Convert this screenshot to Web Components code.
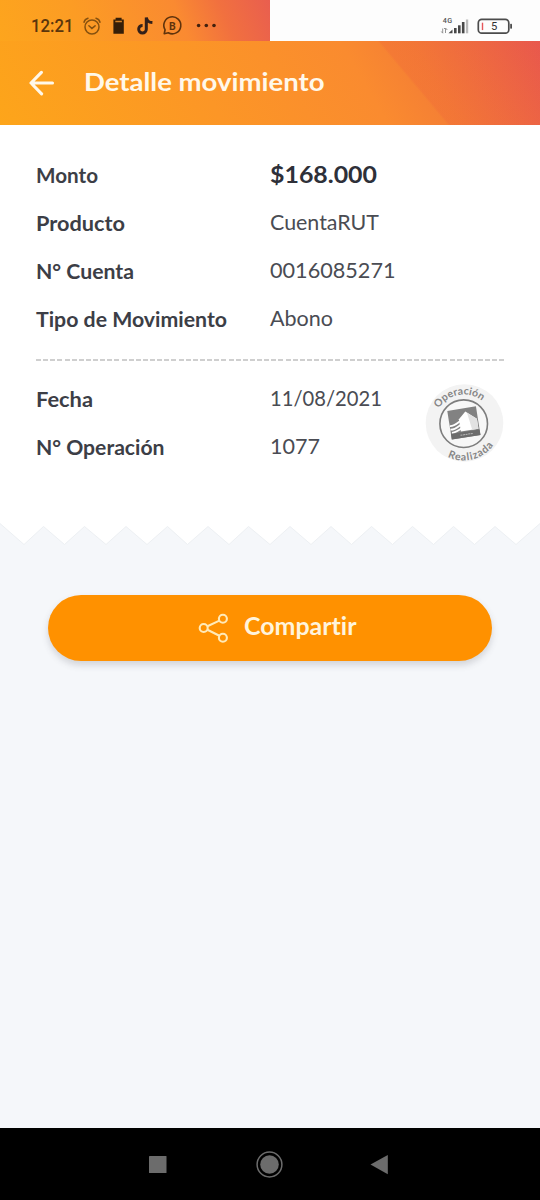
<!DOCTYPE html>
<html lang="es">
<head>
<meta charset="utf-8">
<title>Detalle movimiento</title>
<style>
html,body{margin:0;padding:0}
body{width:540px;height:1200px;overflow:hidden;background:#f5f7fa;font-family:Lato,"Open Sans",sans-serif}
</style>
</head>
<body>
<movement-app></movement-app>
<script>
const define=(name,html,setup)=>customElements.define(name,class extends HTMLElement{
  constructor(){super();this.attachShadow({mode:'open'}).innerHTML=html}
  connectedCallback(){if(setup)setup(this,this.shadowRoot)}
});

/* One line of text set to an exact advance width, baseline at 22px. */
define('fit-text',`<style>:host{display:block}svg{display:block;overflow:visible}text{font-variant-ligatures:none}</style><svg height="30"><text y="22" fill="currentColor" lengthAdjust="spacingAndGlyphs"></text></svg>`,(el,r)=>{
  const t=r.querySelector('text'),s=r.querySelector('svg'),len=el.getAttribute('len');
  t.textContent=el.getAttribute('text');
  t.setAttribute('x',el.getAttribute('dx')||0);
  t.setAttribute('textLength',len);
  s.setAttribute('width',len);
  t.style.fontSize=(el.getAttribute('size')||21)+'px';
  t.style.fontWeight=el.getAttribute('weight')||400;
});

define('status-bar',`<style>
:host{display:flex;height:41px;background:#fdfdfd}
.l,.r{width:270px;height:41px}
.l{background:linear-gradient(68deg,#fda51d 0%,#fc9c24 30%,#fa8a31 66%,#f1703f 82%,#e95e4f 100%)}
svg{display:block}
</style>
<div class="l"><svg width="270" height="41" viewBox="0 0 270 41" fill="none" stroke="#553009" stroke-width="1.5">
<text x="31" y="32.4" textLength="42.5" lengthAdjust="spacingAndGlyphs" font-family="Roboto" font-size="17.6" font-weight="500" fill="#5a350c" stroke="none">12:21</text>
<g stroke="#86510f"><circle cx="92" cy="27" r="7"/><path d="M84 22.2q.8-3.2 4-4M100 22.2q-.8-3.2-4-4M88.9 25.8l3 2.6 3.2-2.6" stroke-linecap="round"/></g>
<path d="M113.4 19.5h2.2v-1.8h6v1.8h2.2v14.2h-10.4z" fill="#351e08" stroke="none"/><path d="M115.3 21.5h6.6" stroke="#d58226"/>
<path d="M146.3 17.4v11.8a3.8 3.8 0 1 1-3.7-3.8M146.4 17.6c.4 2.9 2.6 4.8 6 5" stroke="#33201a" stroke-width="3"/>
<path d="M164.2 33.7l.9-3.9a8.5 8.5 0 1 1 3.2 3z" stroke="#60330c" stroke-width="1.6" stroke-linejoin="round"/>
<text x="169.1" y="29.6" font-family="Roboto" font-size="10.5" font-weight="700" fill="#60330c" stroke="none">B</text>
<g fill="#42210e" stroke="none"><circle cx="198.6" cy="25.5" r="1.8"/><circle cx="206.3" cy="25.5" r="1.8"/><circle cx="214" cy="25.5" r="1.8"/></g>
</svg></div>
<div class="r"><svg width="270" height="41" viewBox="0 0 270 41">
<text x="172.7" y="22.5" font-family="Roboto" font-size="7.2" font-weight="500" fill="#555" textLength="9.5">4G</text>
<path d="M172.7 28.5v4.5M171.3 31.5l1.5 1.8M175.5 33v-4.5h-1.5M177.3 30l-1.8-2" fill="none" stroke="#888" stroke-width=".9"/>
<g fill="#484848"><path d="M178.5 33.3l4-3.7v3.7z"/><rect x="184" y="28" width="2.6" height="5.3"/><rect x="188" y="25.3" width="2.6" height="8"/><rect x="191.9" y="22" width="2.6" height="11.3"/><rect x="195.9" y="19.5" width="2.3" height="13.8" fill="#bbb"/></g>
<rect x="208.3" y="19.4" width="30.5" height="13.8" rx="3.5" fill="none" stroke="#4c4c4c" stroke-width="1.7"/>
<rect x="240.2" y="23.7" width="1.8" height="5" rx=".7" fill="#4c4c4c"/><rect x="211.8" y="22.7" width="1.4" height="7.4" fill="#e5575b"/>
<text x="221" y="30.3" font-family="Roboto" font-size="11.2" fill="#333">5</text>
</svg></div>`);

define('app-bar',`<style>
:host{display:flex;box-sizing:border-box;height:84px;padding:28px 0 0 29px;color:#fff8ea;
background:linear-gradient(50deg,transparent 73.3%,rgba(236,85,60,.2) 73.8%,rgba(236,85,60,.1) 100%) no-repeat,linear-gradient(60deg,#fda51a 0%,#fc9626 38%,#fa8b2f 66%,#f47e35 78%,#e8584f 100%)}
svg{display:block;margin-right:26.5px}
</style>
<svg width="28" height="28" viewBox="0 0 28 28" fill="none" stroke="currentColor" stroke-width="3.1" stroke-linecap="round" stroke-linejoin="round"><path d="M12.4 3.3L2 14l10.6 10.8M2.2 14h21.3"/></svg>
<fit-text text="Detalle movimiento" len="240.5" size="25.5" weight="700"></fit-text>`);

define('detail-row',`<style>
:host{display:grid;grid-template-columns:234.5px 1fr;box-sizing:border-box;height:48px;padding-top:9px;color:#3c3e46}
.v{margin-top:-1px;color:#4a4c53}
:host([slot=operation]) .v{margin-top:-.5px}
:host([strong]) .v{margin-top:0;color:#2e3039}
</style><div class="k"></div><div class="v"></div>`,(el,r)=>{
  const add=(sel,text,len,size,weight,dx)=>{const f=document.createElement('fit-text');
    Object.entries({text,len,size,weight,dx}).forEach(([k,v])=>f.setAttribute(k,v));r.querySelector(sel).append(f)};
  const strong=el.hasAttribute('strong'),g=n=>el.getAttribute(n);
  add('.k',g('label'),g('kl'),21,700,g('kx')||0);
  add('.v',g('value'),g('vl'),strong?23.5:21,strong?700:400,g('vx')||0);
});

define('operation-stamp',`<style>:host{display:block}svg{display:block}text{font:700 10.5px Lato,sans-serif;fill:#858585}</style>
<svg width="80" height="80" viewBox="0 0 80 80">
<circle cx="39.5" cy="40" r="38.8" fill="#f3f3f3"/>
<circle cx="38.7" cy="40.7" r="23.8" fill="#f7f7f7" stroke="#7d7d7d" stroke-width="1.6"/>
<g transform="translate(-1.5 -.5) rotate(-9 40 40)"><rect x="25.8" y="26" width="29" height="29" fill="#828282"/>
<path d="M36 48.5V36L43.5 29.5l10.3 9V48.5z" fill="#fff"/><path d="M45 30.8l8.8 7.7V48.5H47.5z" fill="#e2e2e2"/>
<path d="M26 41.5c4 1 8-2 12-4M26 45c5 1 8-2 12.5-4M27 48.5c5 0 8-2 12-4" fill="none" stroke="#fff" stroke-width="1.8"/>
<path d="M25.8 49.5h29V55h-29z" fill="#6c6c6c"/><path d="M35 52.2h13" stroke="#b5b5b5" stroke-dasharray="2 .6"/></g>
<path id="a" d="M13.7 25.4A29.5 29.5 0 0 1 59.6 20.1" fill="none"/><path id="b" d="M22.7 73.8A36.5 36.5 0 0 0 70.3 59.3" fill="none"/>
<text textLength="49.5"><textPath href="#a">Operación</textPath></text>
<text textLength="51"><textPath href="#b">Realizada</textPath></text>
</svg>`);

define('receipt-edge',`<style>:host{display:block}svg{display:block}</style>
<svg width="540" height="28" viewBox="0 520 540 28"><path fill="#fff" stroke="#edf0f3" stroke-width="1" d="M-2 510V522L0 523.5L24 544.5L43.5 526.5L64.5 544.5L84.5 526.5L106 544.5L126 526.5L147 544.5L167.5 526.5L187.5 544.5L208 526.5L229 544.5L248.5 526.5L270 544.5L290 526.5L311 544.5L331 526.5L351.5 544.5L371.5 526.5L392.5 544.5L412.5 526.5L433.5 544.5L453.5 526.5L474.5 544.5L495 526.5L516 544.5L540 523.5L542 522V510z"/></svg>`);

define('receipt-card',`<style>
:host{display:block}
.body{box-sizing:border-box;height:395px;padding:27px 36px 0 35.5px;background:#fff}
.line{display:block;height:2px;margin:14.5px 0 15px .5px;background:repeating-linear-gradient(90deg,#cfcfcf 0 5px,transparent 5px 7.13px)}
.op{display:grid;grid-template-columns:1fr 80px}
operation-stamp{margin:7.5px 0 0 1px}
</style>
<div class="body"><slot name="main"></slot><span class="line"></span><div class="op"><div><slot name="operation"></slot></div><operation-stamp></operation-stamp></div></div>
<receipt-edge></receipt-edge>`);

define('share-button',`<style>
:host{display:block}
button{display:flex;box-sizing:border-box;width:444px;height:66px;margin:0;padding:18px 0 0 150px;border:0;border-radius:33px;background:#ff9100;color:#fff4dc;box-shadow:0 4px 7px rgba(70,70,80,.2);font-family:inherit}
svg{display:block;margin-right:14.5px}
</style>
<button aria-label="Compartir"><svg width="31" height="31" viewBox="0 0 31 31" fill="none" stroke="#ffeab8" stroke-width="2.1"><circle cx="5.7" cy="15" r="4"/><circle cx="24.9" cy="5.8" r="4"/><circle cx="24.9" cy="24.7" r="4"/><path d="M9.4 13.2l12-5.6M9.4 16.8l12 6"/></svg>
<fit-text text="Compartir" len="112.5" size="24" weight="700"></fit-text></button>`);

define('nav-bar',`<style>:host{display:block;height:72px;background:#000}svg{display:block}</style>
<svg width="540" height="72" viewBox="0 0 540 72" fill="#6c6c6c"><rect x="149" y="28" width="17.5" height="17" rx=".6"/><circle cx="269.5" cy="36.5" r="9.3"/><circle cx="269.5" cy="36.5" r="12.4" fill="none" stroke="#6c6c6c" stroke-width="1.5"/><path d="M370.5 36.5L387.8 27v19.2z"/></svg>`);

define('movement-app',`<style>
:host{display:flex;flex-direction:column;width:540px;height:1200px;background:#f5f7fa}
share-button{margin:47px 48px 0}
nav-bar{margin-top:auto}
</style>
<status-bar></status-bar><app-bar></app-bar>
<receipt-card>
<detail-row slot="main" strong label="Monto" kl="62" value="$168.000" vl="107"></detail-row>
<detail-row slot="main" label="Producto" kl="89" value="CuentaRUT" vl="109"></detail-row>
<detail-row slot="main" label="N° Cuenta" kl="98" value="0016085271" vl="125.5"></detail-row>
<detail-row slot="main" label="Tipo de Movimiento" kl="191" value="Abono" vl="63"></detail-row>
<detail-row slot="operation" label="Fecha" kl="57" value="11/08/2021" vl="112"></detail-row>
<detail-row slot="operation" label="N° Operación" kl="128.5" value="1077" vl="50"></detail-row>
</receipt-card>
<share-button></share-button>
<nav-bar></nav-bar>`);
</script>
</body>
</html>
